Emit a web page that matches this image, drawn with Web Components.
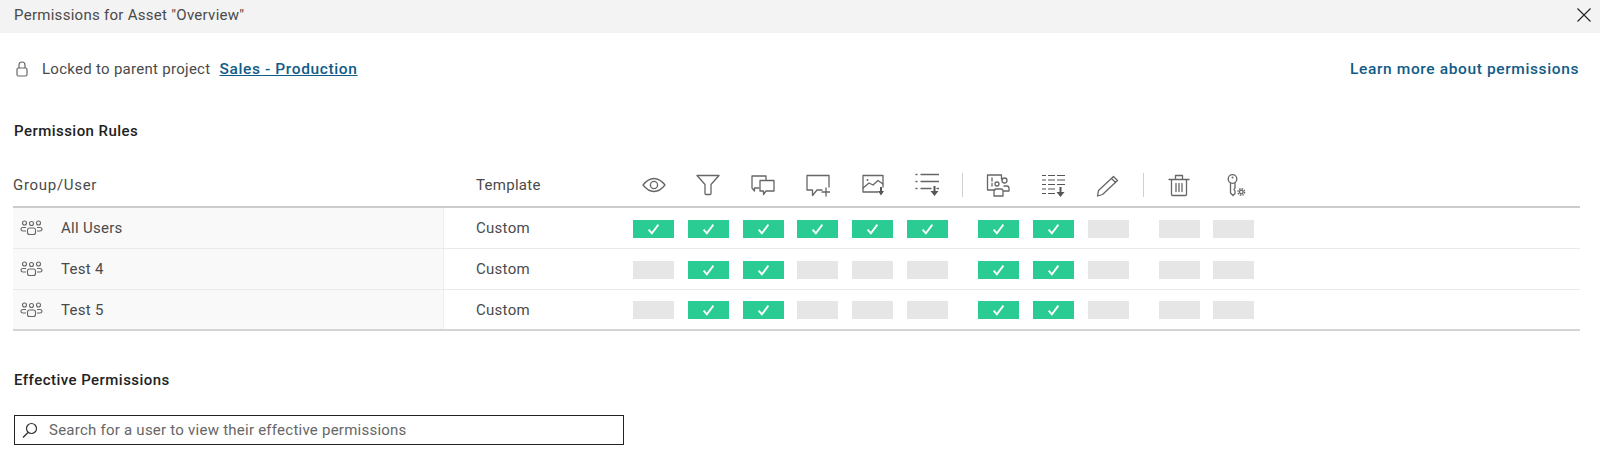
<!DOCTYPE html>
<html lang="en"><head><meta charset="utf-8"><title>Permissions</title>
<style>html,body{margin:0;background:#fff;height:100%;overflow:hidden}body{font:15px Roboto,"Liberation Sans",sans-serif;color:#4a4a4a;letter-spacing:.28px}</style></head>
<body><perm-dialog></perm-dialog>
<script>
const S='fill="none" stroke="#666" stroke-width="1.3" stroke-linecap="round" stroke-linejoin="round"';
const ICONS={
eye:`<path ${S} d="M1 12C5 7 9 5.500 12 5.500S19 7 23 12C19 17 15 18.500 12 18.500S5 17 1 12Z"/><circle ${S} cx="12" cy="12" r="3.600"/>`,
filter:`<path ${S} d="M1 2.500H23L15 11.500V20.500Q15 21.500 14 21.500H10Q9 21.500 9 20.500V11.500Z"/>`,
comments:`<path ${S} d="M8 15H3.500L3.500 18L1 15V3H15V7"/><path ${S} d="M9 7.500H23V18H15L12.500 21.500V18H9Z"/>`,
commentadd:`<path ${S} d="M1 2.500H23V14M16 17H11L6.500 22.500V17H1V2.500"/><path ${S} d="M20 15V23M16 19H24"/>`,
image:`<path ${S} d="M17 19H2V2.500H22V14"/><path ${S} d="M2 15L8 10L12 12L17 7.500L22 11"/><circle cx="6.500" cy="7" r="1" fill="#666"/><path fill="#555" d="M17 18H23L20 22.500ZM19 14H21V18H19Z"/>`,
list:`<path ${S} d="M1 1.500H2M6 1.500H24M1 8.500H2M6 8.500H24M1 15.500H2M6 15.500H16M22 15.500H24"/><path fill="#555" d="M15.500 18H23.500L19.500 23ZM18.500 13H20.500V18H18.500Z"/>`,
usersgrid:`<path ${S} d="M9 17H1.500V2H15.500V6"/><path ${S} d="M6 5V8M6 10.500V13"/><circle ${S} cx="11" cy="11" r="2"/><circle ${S} cx="18.500" cy="7.500" r="2.500"/><path ${S} d="M8 23V18Q8 16 10 16H15Q17 16 17 18V23ZM18 13H21Q23 13 23 15.500V18H18"/>`,
datadown:`<path stroke="#555" stroke-width="1.200" fill="none" d="M1 2.500H5M7 2.500H14M16 2.500H24M1 7H5M7 7H14M16 7H24M1 11.500H5M7 11.500H14M16 11.500H24M1 16H5M7 16H14M1 20.500H5M7 20.500H14"/><path fill="#555" d="M15.500 19H23.500L19.500 24ZM18.500 14H20.500V19H18.500Z"/>`,
pencil:`<path ${S} d="M2.500 17.500L17.500 3.500L21.500 7.500L6.500 21.500L1.500 23ZM15.500 5.500L19.500 9.500"/>`,
trash:`<path ${S} d="M2 6.500H22M8.500 6.500V2.500H15.500V6.500M4.500 6.500V21.500Q4.500 22.500 5.500 22.500H18.500Q19.500 22.500 19.500 21.500V6.500M9 10.500V18.500M12 10.500V18.500M15 10.500V18.500"/>`,
key:`<circle ${S} cx="10.500" cy="6" r="4.300"/><circle cx="10.500" cy="4.500" r="1" fill="#666"/><path ${S} d="M8.500 10V20L11 22.500L13 20.500V18L12 16.500L13 15V10"/><circle ${S} cx="19.300" cy="19" r="1.800"/><circle cx="19.300" cy="19" r="3.300" fill="none" stroke="#666" stroke-width="1.400" stroke-dasharray="1.500 1.090"/>`
};
class PermElement extends HTMLElement{
  constructor(){super();this.attachShadow({mode:'open'});}
  set html(v){this.shadowRoot.innerHTML=v;}
}
class PermIcon extends PermElement{connectedCallback(){this.html=`<style>:host{display:flex;width:41px;height:24px;justify-content:center}svg{width:24px;height:24px}</style><svg viewBox="0 0 24 24">${ICONS[this.getAttribute('name')]}</svg>`;}}
class PermMark extends PermElement{connectedCallback(){const on=this.hasAttribute('on');this.html=`<style>:host{display:flex;width:41px;height:18px;background:${on?'#2bcc94':'#e6e6e6'};align-items:center;justify-content:center}svg{width:13px;height:12px}</style>${on?'<svg viewBox="0 0 12 11"><path d="M1.500 6L4.500 9.500L10.500 1.500" fill="none" stroke="#fff" stroke-width="1.700"/></svg>':''}`;}}
class PermStrip extends PermElement{connectedCallback(){this.html=`<style>:host{display:flex;align-items:center}.g{display:flex;gap:13.800px;align-items:center}.s{width:30px;display:flex;justify-content:center}.s i{display:block;width:1px;height:24px;background:var(--sep,transparent)}</style><div class="g"><slot name="a"></slot></div><div class="s"><i></i></div><div class="g"><slot name="b"></slot></div><div class="s"><i></i></div><div class="g"><slot name="c"></slot></div>`;}}
class RuleRow extends PermElement{connectedCallback(){
  const on=(this.getAttribute('on')||'').split('').map(c=>c==='1');
  const slots=['a','a','a','a','a','a','b','b','b','c','c'];
  this.html=`<style>:host{display:flex;height:40px;border-bottom:1px solid #e9e9e9;align-items:stretch}:host([last]){border-bottom:2px solid #d4d4d4;height:39px}
  .n{background:#f9f9f9;border-right:1px solid #eee;display:flex;align-items:center;gap:18px;padding-left:7px;box-sizing:border-box;width:431px}
  .n svg{width:23px;height:20px}.t{width:189px;display:flex;align-items:center;padding-left:32px;box-sizing:border-box}perm-strip{margin-top:1px}</style>
  <div class="n"><svg viewBox="0 0 23 20"><g fill="none" stroke="#666" stroke-width="1.100"><circle cx="4.500" cy="5" r="2"/><circle cx="11.500" cy="5.500" r="2"/><circle cx="18.500" cy="5" r="2"/><path d="M6 9.500H3Q1 9.500 1 11.500Q1 13 3 13H6M17 9.500H20Q22 9.500 22 11.500Q22 13 20 13H17"/><rect x="7.500" y="10" width="8" height="6.500" rx="2"/></g></svg><span>${this.getAttribute('label')}</span></div>
  <div class="t">Custom</div><perm-strip>${on.map((v,i)=>`<perm-mark slot="${slots[i]}" ${v?'on':''}></perm-mark>`).join('')}</perm-strip>`;}}
class RulesHead extends PermElement{connectedCallback(){
  const names=[['eye','a'],['filter','a'],['comments','a'],['commentadd','a'],['image','a'],['list','a'],['usersgrid','b'],['datadown','b'],['pencil','b'],['trash','c'],['key','c']];
  this.html=`<style>:host{display:flex;height:36px;padding-bottom:3px;border-bottom:2px solid #ccc;align-items:center;--sep:#d0d0d0}
  .g{width:463px;letter-spacing:.7px}.t{width:157px}</style><div class="g">Group/User</div><div class="t">Template</div><perm-strip>${names.map(([n,s])=>`<perm-icon name="${n}" slot="${s}"></perm-icon>`).join('')}</perm-strip>`;}}
class SectionTitle extends PermElement{connectedCallback(){this.html=`<style>:host{display:block;font-weight:500;color:#222;letter-spacing:.46px}</style><slot></slot>`;}}
class DialogHeader extends PermElement{connectedCallback(){this.html=`<style>:host{display:flex;height:33px;background:#f3f3f3;align-items:center;justify-content:space-between;padding:0 9px 4px 14px;box-sizing:border-box}svg{width:14px;height:14px}</style><slot></slot><svg viewBox="0 0 14 14"><path d="M.5.500L13.500 13.500M13.500.500L.5 13.500" stroke="#222" stroke-width="1.100"/></svg>`;}}
class LockRow extends PermElement{connectedCallback(){this.html=`<style>:host{display:flex;align-items:center;height:24px;margin-right:1px}svg{width:12px;height:16px;margin:0 14px 0 3px}a{color:#0f5c87;font-weight:500;font-size:15.500px;letter-spacing:.62px;text-decoration:underline;margin-left:9px}.r{margin-left:auto;text-decoration:none}</style>
<svg viewBox="0 0 12 16"><path d="M3 7V4Q3 1 6 1T9 4V7" fill="none" stroke="#666" stroke-width="1.200"/><rect x="1" y="7" width="10" height="8" rx="1.500" fill="none" stroke="#666" stroke-width="1.200"/></svg><span>Locked to parent project</span><a href="#">Sales - Production</a><a class="r" href="#">Learn more about permissions</a>`;}}
class SearchBox extends PermElement{connectedCallback(){this.html=`<style>:host{display:flex;width:610px;height:30px;border:1px solid #222;box-sizing:border-box;align-items:center;padding-left:7px;gap:11px;color:#666;letter-spacing:.24px}svg{width:16px;height:16px}</style><svg viewBox="0 0 16 16"><circle cx="9.500" cy="6.500" r="5" fill="none" stroke="#333" stroke-width="1.200"/><path d="M6 10.500L1 15.500" stroke="#333" stroke-width="1.400"/></svg><span>Search for a user to view their effective permissions</span>`;}}
class PermDialog extends PermElement{connectedCallback(){this.html=`<style>:host{display:block}main{display:flex;flex-direction:column;padding:0 20px 0 13px}
lock-row{margin-top:24px}.a{margin-top:41px;padding-left:1px}.h{margin-top:27px}.e{margin-top:40px;padding-left:1px}search-box{margin-top:26px;margin-left:1px}</style>
<dialog-header>Permissions for Asset "Overview"</dialog-header>
<main><lock-row></lock-row><section-title class="a">Permission Rules</section-title>
<rules-head class="h"></rules-head>
<rule-row label="All Users" on="11111111000"></rule-row><rule-row label="Test 4" on="01100011000"></rule-row><rule-row last label="Test 5" on="01100011000"></rule-row>
<section-title class="e">Effective Permissions</section-title><search-box></search-box></main>`;}}
const defs={'perm-icon':PermIcon,'perm-mark':PermMark,'perm-strip':PermStrip,'rule-row':RuleRow,'rules-head':RulesHead,'section-title':SectionTitle,'dialog-header':DialogHeader,'lock-row':LockRow,'search-box':SearchBox,'perm-dialog':PermDialog};
for(const k in defs)customElements.define(k,defs[k]);
</script></body></html>
